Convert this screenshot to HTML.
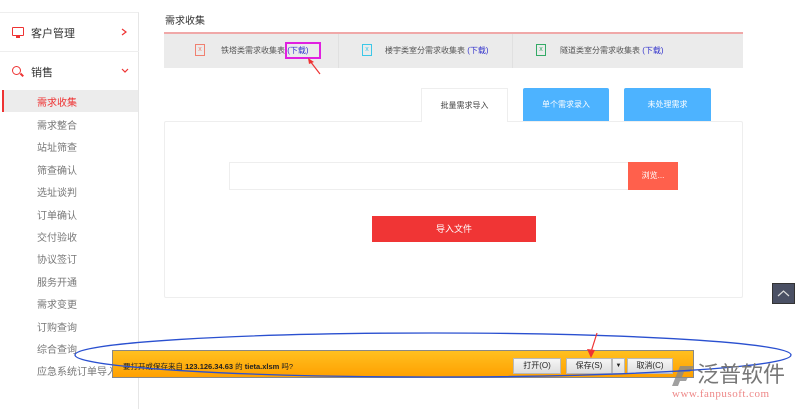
<!DOCTYPE html>
<html><head><meta charset="utf-8"><style>
*{margin:0;padding:0;box-sizing:border-box}
body{width:799px;height:409px;overflow:hidden;background:#fff;font-family:"Liberation Sans","Noto Sans CJK SC",sans-serif;position:relative;color:#555}
.a{position:absolute}
.side{left:0;top:12px;width:139px;height:397px;border-right:1px solid #e6e6e6;border-top:1px solid #eee}
.it{position:absolute;left:37px;font-size:10px;color:#777;white-space:nowrap}
.t{font-size:10px;color:#555;white-space:nowrap}
.btn{position:absolute;top:358px;height:16px;background:linear-gradient(#f6f6f6,#dedede);border:1px solid #b8b8b8;font-size:8px;color:#222;text-align:center;line-height:14px}
</style></head><body>
<div class="a side"></div>
<div class="a" style="left:0;top:51px;width:139px;height:1px;background:#eee"></div>
<div class="a" style="left:12px;top:27px;width:12px;height:9px;border:1.5px solid #e33;border-radius:1px"></div>
<div class="a" style="left:16px;top:36px;width:4px;height:2px;background:#e33"></div>
<div class="a t" style="left:31px;top:25px;font-size:11px;color:#333">客户管理</div>
<svg class="a" style="left:120px;top:27px" width="8" height="10"><path d="M2 2 L6 5 L2 8" stroke="#e33" fill="none" stroke-width="1.2"/></svg>
<div class="a" style="left:12px;top:66px;width:9px;height:9px;border:1.5px solid #e33;border-radius:50%"></div>
<div class="a" style="left:20px;top:74px;width:4px;height:1.5px;background:#e33;transform:rotate(45deg)"></div>
<div class="a t" style="left:31px;top:64px;font-size:11px;color:#333">销售</div>
<svg class="a" style="left:120px;top:67px" width="10" height="8"><path d="M2 2 L5 5 L8 2" stroke="#e33" fill="none" stroke-width="1.2"/></svg>
<div class="a" style="left:2px;top:90px;width:136px;height:22px;background:#ececec;border-left:2px solid #e33"></div>
<div class="it" style="top:94px;color:#e33">需求收集</div>
<div class="it" style="top:117px">需求整合</div>
<div class="it" style="top:139px">站址筛查</div>
<div class="it" style="top:162px">筛查确认</div>
<div class="it" style="top:184px">选址谈判</div>
<div class="it" style="top:207px">订单确认</div>
<div class="it" style="top:229px">交付验收</div>
<div class="it" style="top:251px">协议签订</div>
<div class="it" style="top:274px">服务开通</div>
<div class="it" style="top:296px">需求变更</div>
<div class="it" style="top:319px">订购查询</div>
<div class="it" style="top:341px">综合查询</div>
<div class="it" style="top:363px">应急系统订单导入</div>

<div class="a t" style="left:165px;top:12px;font-size:10px;color:#333">需求收集</div>
<div class="a" style="left:164px;top:32px;width:579px;height:36px;background:#ebebeb;border-top:2px solid #f0a8a8"></div>
<div class="a" style="left:338px;top:34px;width:1px;height:34px;background:#e0e0e0"></div>
<div class="a" style="left:512px;top:34px;width:1px;height:34px;background:#e0e0e0"></div>
<div class="a" style="left:195px;top:44px;width:10px;height:12px;border:1px solid #f08070;color:#f08070;font-size:7px;text-align:center;line-height:10px">x</div>
<div class="a t" style="left:221px;top:45px;font-size:8px">铁塔类需求收集表 <span style="color:#33c">(下载)</span></div>
<div class="a" style="left:285px;top:42px;width:36px;height:17px;border:2px solid #e020e0"></div>
<svg class="a" style="left:300px;top:55px" width="24" height="22"><line x1="20" y1="19" x2="10" y2="6" stroke="#e33" stroke-width="1.2"/><path d="M8 3 L14 7 L9 9Z" fill="#e33"/></svg>
<div class="a" style="left:362px;top:44px;width:10px;height:12px;border:1px solid #3cc8e8;color:#3cc8e8;font-size:7px;text-align:center;line-height:10px">x</div>
<div class="a t" style="left:385px;top:45px;font-size:8px">楼宇类室分需求收集表 <span style="color:#33c">(下载)</span></div>
<div class="a" style="left:536px;top:44px;width:10px;height:12px;border:1px solid #3a6;color:#3a6;font-size:7px;text-align:center;line-height:10px">x</div>
<div class="a t" style="left:560px;top:45px;font-size:8px">隧道类室分需求收集表 <span style="color:#33c">(下载)</span></div>

<div class="a" style="left:164px;top:121px;width:579px;height:177px;border:1px solid #eee;border-radius:2px"></div>
<div class="a" style="left:421px;top:88px;width:87px;height:34px;background:#fff;border:1px solid #eee;border-bottom:none;font-size:8px;color:#444;text-align:center;line-height:34px">批量需求导入</div>
<div class="a" style="left:523px;top:88px;width:86px;height:33px;background:#4db3ff;font-size:8px;color:#fff;text-align:center;line-height:33px;border-radius:2px 2px 0 0">单个需求录入</div>
<div class="a" style="left:624px;top:88px;width:87px;height:33px;background:#4db3ff;font-size:8px;color:#fff;text-align:center;line-height:33px;border-radius:2px 2px 0 0">未处理需求</div>
<div class="a" style="left:229px;top:162px;width:400px;height:28px;border:1px solid #eee"></div>
<div class="a" style="left:628px;top:162px;width:50px;height:28px;background:#ff604c;color:#fff;font-size:8px;text-align:center;line-height:28px">浏览...</div>
<div class="a" style="left:372px;top:216px;width:164px;height:26px;background:#f03535;color:#fff;font-size:9px;text-align:center;line-height:26px">导入文件</div>
<div class="a" style="left:772px;top:283px;width:23px;height:21px;background:#4a5064;border:1px solid #333"><svg width="21" height="19"><path d="M5 12 L10.5 7 L16 12" stroke="#ddd" fill="none" stroke-width="1.2"/></svg></div>

<div class="a" style="left:112px;top:350px;width:582px;height:28px;background:linear-gradient(#ffc020,#ffa000);border:1px solid #888"></div>
<div class="a t" style="left:123px;top:361px;font-size:7.5px;color:#222">要打开或保存来自 <b>123.126.34.63</b> 的 <b>tieta.xlsm</b> 吗?</div>
<div class="btn" style="left:513px;width:48px">打开(O)</div>
<div class="btn" style="left:566px;width:46px">保存(S)</div>
<div class="btn" style="left:612px;width:13px;font-size:6px">▼</div>
<div class="btn" style="left:627px;width:46px">取消(C)</div>
<svg class="a" style="left:0;top:0" width="799" height="409"><path d="M672 386 L680 366 L694 366 L690 372 L684 372 L682 377 L688 377 L686 381 L680 381 L678 386Z" fill="#888" opacity=".8"/><ellipse cx="433" cy="355" rx="358" ry="22" fill="none" stroke="#2a50d0" stroke-width="1.3"/><line x1="597" y1="333" x2="591" y2="352" stroke="#e33" stroke-width="1.2"/><path d="M587 349 L591 358 L595 350Z" fill="#e33"/></svg>
<div class="a" style="left:697px;top:360px;font-size:22px;line-height:26px;color:#777;white-space:nowrap;font-family:'Noto Sans CJK SC',sans-serif">泛普软件</div>
<div class="a" style="left:672px;top:388px;font-size:11px;color:#e88;letter-spacing:0.5px;font-family:'Liberation Serif',serif;white-space:nowrap">www.fanpusoft.com</div>
</body></html>
